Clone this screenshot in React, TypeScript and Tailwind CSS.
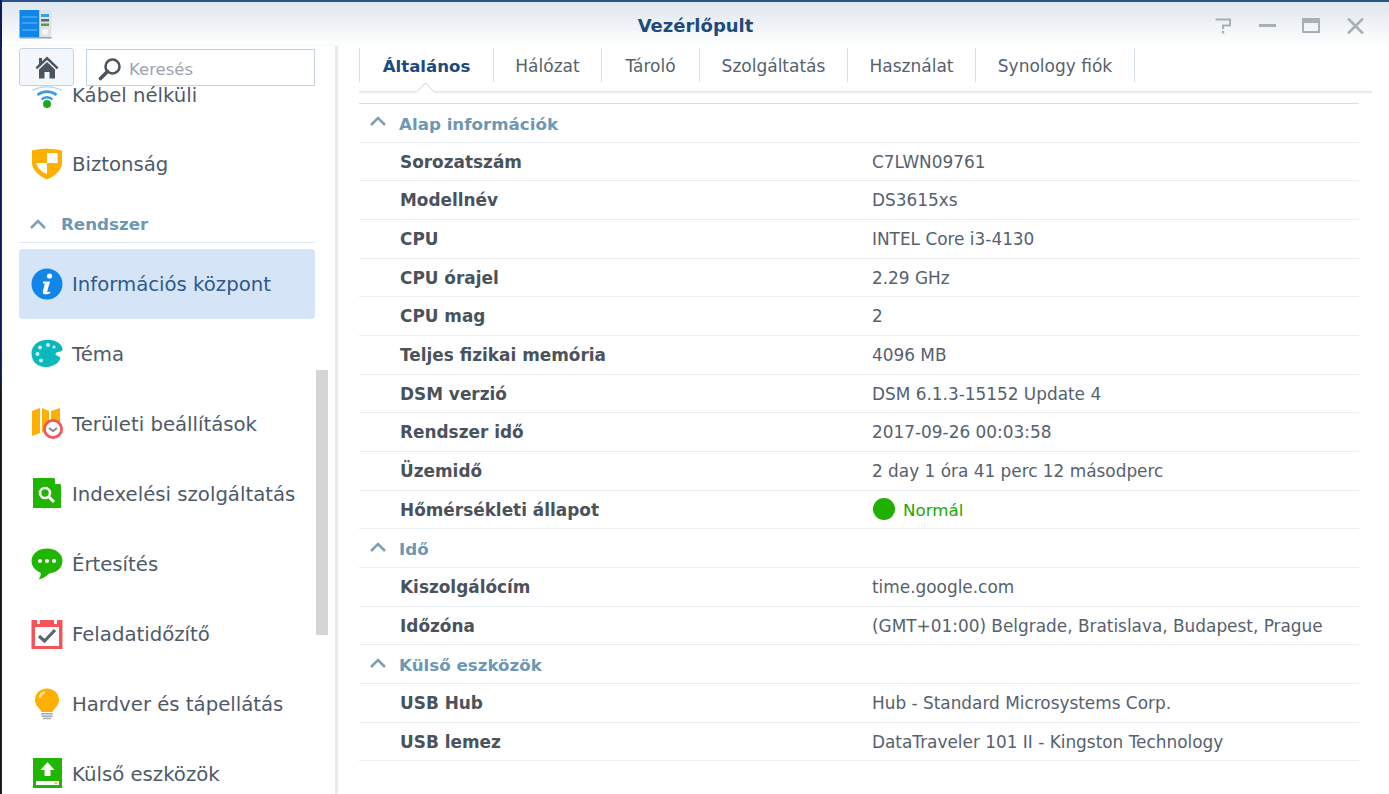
import React from 'react';

const FONT = 'font-["DejaVu_Sans",sans-serif]';

const WifiIcon = () => (
  <svg width="32" height="32" viewBox="0 0 32 32" fill="none">
    <path d="M1.5 11.5C10 6.5 22 6.5 30.5 11.5" stroke="#b5dcf7" strokeWidth="1.6" />
    <path d="M6.5 16C12 11.5 20 11.5 25.5 16" stroke="#3a9bea" strokeWidth="2.6" />
    <path d="M10.5 20.5C13.5 17.5 18.5 17.5 21.5 20.5" stroke="#3a9bea" strokeWidth="2.4" />
    <circle cx="16" cy="25" r="4" fill="#20a81a" />
  </svg>
);

const ShieldIcon = () => (
  <svg width="32" height="32" viewBox="0 0 32 32">
    <path d="M1 2.5C6 1.5 10 1 16 0.5C22 1 26 1.5 31 2.5V15C31 22 24 28 16 31.5C8 28 1 22 1 15Z" fill="#fdb000" />
    <path d="M16 5H26.5V15H16ZM16 15V26C11 24 5.5 20 5.5 15Z" fill="#fff" />
  </svg>
);

const InfoIcon = () => (
  <svg width="32" height="32" viewBox="0 0 32 32">
    <circle cx="16" cy="16" r="15.5" fill="#1186e8" />
    <circle cx="18.5" cy="8" r="2.6" fill="#fff" />
    <path d="M12 13.5H19L16.2 23.5C16 24.4 16.8 24.6 19 23.5L19.4 25C16.5 26.5 11 27.5 11.8 23.5L13.8 15.5H12Z" fill="#fff" />
  </svg>
);

const PaletteIcon = () => (
  <svg width="32" height="32" viewBox="0 0 32 32">
    <path d="M14 2C24 1 31 6 31.5 11C31.8 14 27 13.5 25.5 14.5C23.5 16 25 17.5 28 18.5C31 20 28 27 17 29C7 30 0.5 24 0.5 15C0.5 8 7 2.5 14 2Z" fill="#0ab8bd" />
    <circle cx="9" cy="9.5" r="2" fill="#c8f1f2" />
    <circle cx="17" cy="7" r="2" fill="#c8f1f2" />
    <circle cx="6.5" cy="16" r="2" fill="#c8f1f2" />
    <circle cx="10" cy="22.5" r="2" fill="#c8f1f2" />
    <circle cx="23" cy="9" r="1.6" fill="#c8f1f2" />
  </svg>
);

const RegionIcon = () => (
  <svg width="32" height="32" viewBox="0 0 32 32">
    <path d="M1 3L9 0V25L1 28Z" fill="#fdb000" />
    <path d="M11 0L18 3V17L11 25Z" fill="#fdb000" />
    <path d="M20 3L29 0V14H20Z" fill="#fdb000" />
    <circle cx="22" cy="21" r="8.6" fill="#fff" stroke="#f4555a" strokeWidth="2.8" />
    <path d="M18 20L22 23L26 20" fill="none" stroke="#7d8794" strokeWidth="2" />
  </svg>
);

const IndexIcon = () => (
  <svg width="32" height="32" viewBox="0 0 32 32">
    <path d="M2 0H23L30 7V30H2Z" fill="#20b500" />
    <path d="M24 0L30 6H24Z" fill="#fff" />
    <circle cx="14" cy="15" r="5" fill="none" stroke="#fff" strokeWidth="2.6" />
    <path d="M18 19L23 24" stroke="#fff" strokeWidth="3" />
  </svg>
);

const ChatIcon = () => (
  <svg width="32" height="32" viewBox="0 0 32 32">
    <path d="M16 0.5C25 0.5 31.5 6 31.5 13C31.5 20 25 25 18 25.5C15 28.5 11 31 7.5 31.5C9.5 29 10 27 9.5 24.5C4 22.5 0.5 18 0.5 13C0.5 6 7 0.5 16 0.5Z" fill="#20b500" />
    <circle cx="9" cy="13" r="2" fill="#fff" />
    <circle cx="16" cy="13" r="2" fill="#fff" />
    <circle cx="23" cy="13" r="2" fill="#fff" />
  </svg>
);

const TaskIcon = () => (
  <svg width="32" height="32" viewBox="0 0 32 32">
    <path d="M0.5 2H31.5V31H0.5Z" fill="#f4555a" />
    <rect x="4" y="9" width="24" height="19" fill="#fff" />
    <rect x="6" y="0.5" width="3" height="5.5" rx="1" fill="#fff" />
    <rect x="23" y="0.5" width="3" height="5.5" rx="1" fill="#fff" />
    <path d="M8 18L13.5 23L24 12" fill="none" stroke="#5b6470" strokeWidth="3.2" />
  </svg>
);

const BulbIcon = () => (
  <svg width="32" height="32" viewBox="0 0 32 32">
    <path d="M16 0.5C23 0.5 28 5.5 28 12C28 18 23 20 21.5 24H10.5C9 20 4 18 4 12C4 5.5 9 0.5 16 0.5Z" fill="#fdb000" />
    <path d="M9 10C9 7 11 5 14 4.5" fill="none" stroke="#ffe39a" strokeWidth="2.4" />
    <rect x="10" y="25" width="12" height="1.6" fill="#a9afb7" />
    <rect x="10.5" y="27.4" width="11" height="1.6" fill="#a9afb7" />
    <rect x="12" y="29.6" width="8" height="1.6" fill="#a9afb7" />
  </svg>
);

const ExternalIcon = () => (
  <svg width="32" height="32" viewBox="0 0 32 32">
    <rect x="2" y="0" width="29" height="30" fill="#20b500" />
    <path d="M16.5 4L23.5 12H19.5V18H13.5V12H9.5Z" fill="#fff" />
    <rect x="5" y="23" width="23" height="4" fill="#fff" />
    <rect x="23.5" y="24.3" width="3" height="1.5" fill="#fdb000" />
  </svg>
);

const Chevron = ({ className = '' }: { className?: string }) => (
  <svg className={className} width="16" height="10" viewBox="0 0 16 10" fill="none">
    <path d="M1 9L8 2L15 9" stroke="#7f9fb8" strokeWidth="2.6" />
  </svg>
);

const navItems = [
  { label: 'Kábel nélküli', icon: <WifiIcon /> },
  { label: 'Biztonság', icon: <ShieldIcon /> },
  { section: 'Rendszer' },
  { label: 'Információs központ', icon: <InfoIcon />, active: true },
  { label: 'Téma', icon: <PaletteIcon /> },
  { label: 'Területi beállítások', icon: <RegionIcon /> },
  { label: 'Indexelési szolgáltatás', icon: <IndexIcon /> },
  { label: 'Értesítés', icon: <ChatIcon /> },
  { label: 'Feladatidőzítő', icon: <TaskIcon /> },
  { label: 'Hardver és tápellátás', icon: <BulbIcon /> },
  { label: 'Külső eszközök', icon: <ExternalIcon /> },
];

const tabs = ['Általános', 'Hálózat', 'Tároló', 'Szolgáltatás', 'Használat', 'Synology fiók'];
const tabWidths = ['w-[134px]', 'w-[108px]', 'w-[98px]', 'w-[148px]', 'w-[128px]', 'w-[159px]'];

const sections = [
  {
    title: 'Alap információk',
    rows: [
      ['Sorozatszám', 'C7LWN09761'],
      ['Modellnév', 'DS3615xs'],
      ['CPU', 'INTEL Core i3-4130'],
      ['CPU órajel', '2.29 GHz'],
      ['CPU mag', '2'],
      ['Teljes fizikai memória', '4096 MB'],
      ['DSM verzió', 'DSM 6.1.3-15152 Update 4'],
      ['Rendszer idő', '2017-09-26 00:03:58'],
      ['Üzemidő', '2 day 1 óra 41 perc 12 másodperc'],
      ['Hőmérsékleti állapot', 'Normál'],
    ],
  },
  {
    title: 'Idő',
    rows: [
      ['Kiszolgálócím', 'time.google.com'],
      ['Időzóna', '(GMT+01:00) Belgrade, Bratislava, Budapest, Prague'],
    ],
  },
  {
    title: 'Külső eszközök',
    rows: [
      ['USB Hub', 'Hub - Standard Microsystems Corp.'],
      ['USB lemez', 'DataTraveler 101 II - Kingston Technology'],
    ],
  },
];

export default function App() {
  return (
    <div className={`${FONT} flex h-[794px] w-[1389px] overflow-hidden`}>
      {/* desktop wallpaper peeking out on the left */}
      <div className="w-[2px] shrink-0 bg-gradient-to-b from-[#0b1b5e] from-45% to-[#1a1512] to-50%" />

      <div className="relative flex min-w-0 flex-1 flex-col bg-white">
        <div className="h-[2px] bg-[#2a5486]" />
        <header className="flex h-[44px] shrink-0 items-center bg-gradient-to-b from-[#dfe6ee] to-white pr-[25px]">
          <div className="w-[174px] pl-[17px]">
            <svg width="34" height="30" viewBox="0 0 34 30">
              <rect x="0.5" y="1" width="20" height="27" fill="#1186e8" />
              <rect x="20.5" y="1" width="12" height="27" fill="#dfe3e7" />
              <path d="M3 8H18M3 14H18M3 21H18" stroke="#6fbdf3" strokeWidth="1" />
              <rect x="22" y="5" width="8" height="3" fill="#3aa0d8" />
              <rect x="22" y="10" width="8" height="2.5" fill="#5b6470" />
              <rect x="22" y="14.5" width="8" height="2.5" fill="#5b9a3a" />
              <circle cx="26" cy="23" r="3" fill="#f4f6f8" />
              <rect x="0.5" y="28" width="32" height="1.5" fill="#9aa3ad" />
            </svg>
          </div>
          <div className="flex-1 pt-[3px] text-center text-[18px] font-bold text-[#1f4a7d]">Vezérlőpult</div>
          <div className="flex w-[149px] items-center justify-between pt-[3px]">
            <svg width="17" height="16" viewBox="0 0 17 16" fill="none">
              <path d="M0.5 1.5H15V7.5H8V11" stroke="#a9afb5" strokeWidth="2" />
              <rect x="6.8" y="13" width="2.4" height="2.4" fill="#a9afb5" />
            </svg>
            <div className="h-[3px] w-[17px] bg-[#a9afb5]" />
            <div className="h-[15px] w-[18px] border-2 border-t-[5px] border-[#a9afb5]" />
            <svg width="17" height="16" viewBox="0 0 17 16" fill="none">
              <path d="M1 0.5L16 15.5M16 0.5L1 15.5" stroke="#a9afb5" strokeWidth="2.6" />
            </svg>
          </div>
        </header>

        <div className="flex min-h-0 flex-1">
          <aside className="relative w-[335px] shrink-0 overflow-hidden border-r-2 border-[#e6e8ea] shadow-[1px_0_2px_#e6e8ea]">
            <div className="absolute left-[17px] top-[2px] z-10 flex items-center gap-[12px]">
              <button className="flex h-[38px] w-[55px] items-center justify-center rounded-[3px] border border-[#c5d2e0] bg-[#f3f6fa]">
                <svg width="24" height="23" viewBox="0 0 24 23">
                  <path d="M12 0.5L23.5 11.5L21.8 13.2L12 4L2.2 13.2L0.5 11.5L4 8V2H7V5.2Z" fill="#4b5560" />
                  <path d="M4 13.5L12 6L20 13.5V22.5H14.5V16H9.5V22.5H4Z" fill="#4b5560" />
                </svg>
              </button>
              <div className="mt-[1px] flex h-[37px] w-[229px] items-center border border-[#c5d2e0] bg-white pl-[11px] pt-[3px]">
                <svg width="24" height="24" viewBox="0 0 24 24" fill="none">
                  <circle cx="14.5" cy="9.5" r="7" stroke="#4b5560" strokeWidth="2.6" />
                  <path d="M9.5 14.5L2.5 21.5" stroke="#4b5560" strokeWidth="3.6" strokeLinecap="round" />
                </svg>
                <span className="ml-[7px] pt-[2px] text-[16.5px] text-[#9aa5b1]">Keresés</span>
              </div>
            </div>

            <div className="ml-[17px] w-[296px] pt-[13px]">
              {navItems.map((item, i) =>
                item.section ? (
                  <div key={item.section} className="flex h-[44px] items-center border-b border-[#e3e9ef] pl-[11px] pt-[7px]">
                    <Chevron />
                    <span className="ml-[15px] pt-[1px] text-[16.7px] font-bold text-[#6d97b5]">{item.section}</span>
                  </div>
                ) : (
                  <div
                    key={item.label}
                    className={`flex h-[70px] items-center gap-[9px] rounded-[4px] pl-[12px] text-[19.7px] ${
                      item.active ? 'mt-[6px] bg-[#d5e5f7] text-[#2f5a8c]' : 'text-[#4f5a68]'
                    } ${i === 0 ? 'pt-[2px]' : ''}`}
                  >
                    {item.icon}
                    <span className="pt-[2px]">{item.label}</span>
                  </div>
                ),
              )}
            </div>

            <div className="absolute left-[314px] top-[324px] h-[265px] w-[12px] bg-[#d3d5d7]" />
          </aside>

          <main className="min-w-0 flex-1 pl-[22px] pr-[30px]">
            <nav className="relative mt-[2px] flex h-[34px] w-[1013px] border-l border-[#d7e0e8]">
              {tabs.map((tab, i) => (
                <div
                  key={tab}
                  className={`flex items-center justify-center border-r border-[#d7e0e8] pt-[4px] ${tabWidths[i]} ${
                    i === 0 ? 'text-[16.6px] font-bold text-[#1f4a7d]' : 'text-[17px] text-[#56616e]'
                  }`}
                >
                  {tab}
                </div>
              ))}
            </nav>
            <div className="relative mt-[9px] h-[3px] w-[1013px] bg-gradient-to-b from-[#dfe0e2] to-white">
              <div className="absolute left-[60px] top-[-6px] h-[13px] w-[13px] rotate-45 border-l border-t border-[#dcdee0] bg-white" />
            </div>
            <div className="mt-[9px] border-t border-[#d7e0e8]">
              {sections.map((section) => (
                <section key={section.title}>
                  <div className="flex h-[38.67px] items-center border-b border-[#e9eef3] pl-[11px]">
                    <Chevron className="mb-[3px]" />
                    <span className="ml-[13px] pt-[3px] text-[16.7px] font-bold text-[#6d97b5]">{section.title}</span>
                  </div>
                  {section.rows.map(([label, value]) => (
                    <div key={label} className="flex h-[38.67px] items-center border-b border-[#e9eef3] pt-[2px] text-[16.9px]">
                      <div className="w-[513px] pl-[41px] font-bold text-[#4a525c]">{label}</div>
                      {value === 'Normál' ? (
                        <div className="flex items-center gap-[8px] text-[16.7px] text-[#20a800]">
                          <span className="ml-[1px] mt-[-2px] h-[22px] w-[22px] rounded-full bg-[#20b000]" />
                          {value}
                        </div>
                      ) : (
                        <div className="text-[#56616e]">{value}</div>
                      )}
                    </div>
                  ))}
                </section>
              ))}
            </div>
          </main>
        </div>
      </div>
    </div>
  );
}
